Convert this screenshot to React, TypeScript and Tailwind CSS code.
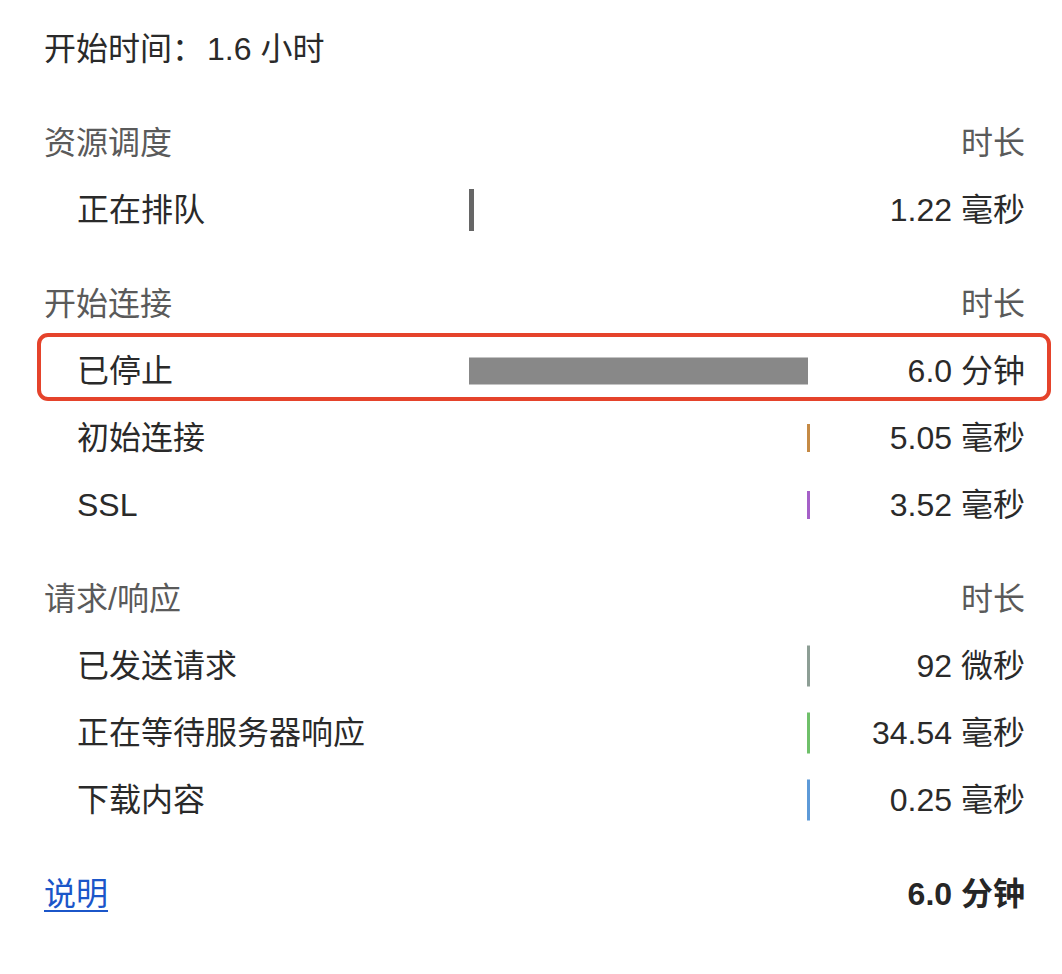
import React from 'react';

type Row = {
  label: string;
  value: string;
  bar: { left: number; width: number; height: number; color: string };
  highlight?: boolean;
};

type Section = { title: string; rows: Row[] };

const sections: Section[] = [
  {
    title: '资源调度',
    rows: [{ label: '正在排队', value: '1.22 毫秒', bar: { left: 0, width: 5, height: 42, color: '#666666' } }],
  },
  {
    title: '开始连接',
    rows: [
      { label: '已停止', value: '6.0 分钟', bar: { left: 0, width: 339, height: 27, color: '#888888' }, highlight: true },
      { label: '初始连接', value: '5.05 毫秒', bar: { left: 338, width: 3, height: 28, color: '#c58a45' } },
      { label: 'SSL', value: '3.52 毫秒', bar: { left: 338, width: 3, height: 28, color: '#a560c8' } },
    ],
  },
  {
    title: '请求/响应',
    rows: [
      { label: '已发送请求', value: '92 微秒', bar: { left: 338, width: 3, height: 41, color: '#8d9e95' } },
      { label: '正在等待服务器响应', value: '34.54 毫秒', bar: { left: 338, width: 3, height: 41, color: '#6fc06a' } },
      { label: '下载内容', value: '0.25 毫秒', bar: { left: 338, width: 3, height: 41, color: '#5d9ad8' } },
    ],
  },
];

function TimingRow({ row }: { row: Row }) {
  return (
    <div className="relative grid h-[67px] grid-cols-[425px_341px_1fr] items-center">
      {row.highlight && (
        <div className="pointer-events-none absolute -left-[7px] -right-[26px] -top-[4px] h-[68px] rounded-[11px] border-[4px] border-[#e5432b]" />
      )}
      <div className="pl-[33px] text-[#2a2a2a]">{row.label}</div>
      <div className="relative h-full">
        <div
          className="absolute top-1/2 -translate-y-1/2"
          style={{ left: row.bar.left, width: row.bar.width, height: row.bar.height, backgroundColor: row.bar.color }}
        />
      </div>
      <div className="text-right text-[#2a2a2a]">{row.value}</div>
    </div>
  );
}

export default function App() {
  return (
    <div
      className="min-h-[974px] bg-white pl-[44px] pr-[37px] pt-[15px] text-[32px] leading-none"
      style={{ fontFamily: '"Liberation Sans", "Noto Sans CJK SC", sans-serif' }}
    >
      {/* Start time */}
      <div className="flex h-[67px] items-center text-[#2a2a2a]">
        开始时间：<span className="ml-[3px]">1.6 小时</span>
      </div>

      {sections.map((s) => (
        <div key={s.title} className="mt-[27px]">
          <div className="flex h-[67px] items-center justify-between text-[#5a5a5a]">
            <span>{s.title}</span>
            <span>时长</span>
          </div>
          {s.rows.map((r) => (
            <TimingRow key={r.label} row={r} />
          ))}
        </div>
      ))}

      {/* Footer */}
      <div className="mt-[27px] flex h-[67px] items-center justify-between">
        <a href="#" className="text-[#1b56c9] underline decoration-2 underline-offset-[5px]">
          说明
        </a>
        <span className="font-bold text-[#262626]">6.0 分钟</span>
      </div>
    </div>
  );
}
